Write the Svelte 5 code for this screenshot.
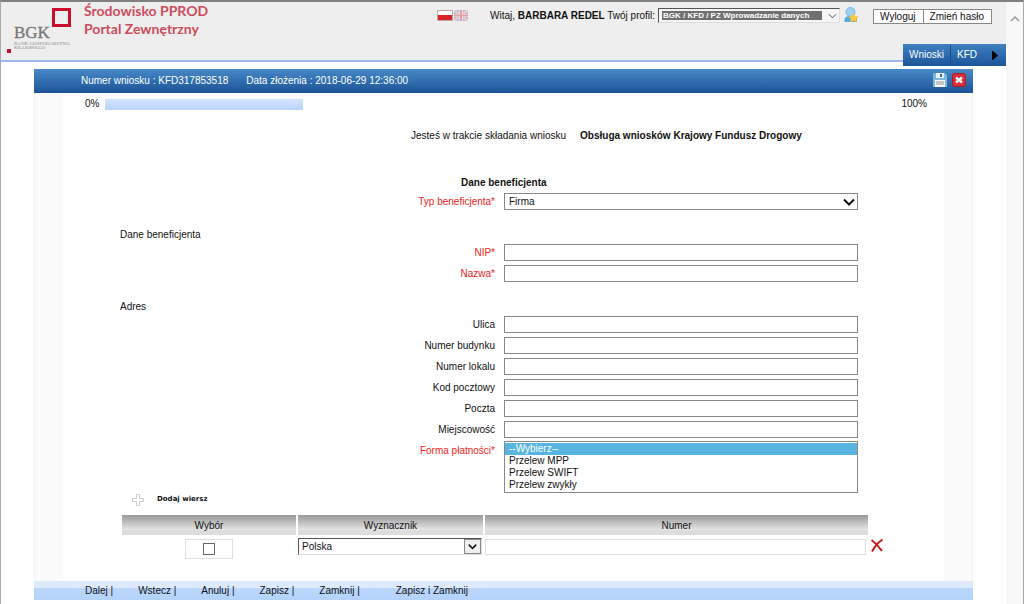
<script>
	let userName = 'BARBARA REDEL';
	let progress = $state(25);
	let beneficiaryType = $state('Firma');
	let payment = $state('');

	const company = [
		{ id: 'nip', label: 'NIP', required: true },
		{ id: 'nazwa', label: 'Nazwa', required: true }
	];

	const address = [
		{ id: 'ulica', label: 'Ulica' },
		{ id: 'budynek', label: 'Numer budynku' },
		{ id: 'lokal', label: 'Numer lokalu' },
		{ id: 'kod', label: 'Kod pocztowy' },
		{ id: 'poczta', label: 'Poczta' },
		{ id: 'miejscowosc', label: 'Miejscowość' }
	];

	const actions = ['Dalej |', 'Wstecz |', 'Anuluj |', 'Zapisz |', 'Zamknij |'];
</script>

{#snippet field(f)}
	<div class="row">
		<label for={f.id} class:required={f.required}>{f.label}{f.required ? '*' : ''}</label>
		<input id={f.id} type="text" />
	</div>
{/snippet}

{#snippet chevron()}
	<svg viewBox="0 0 12 8" width="12" height="8" aria-hidden="true">
		<path d="M1 1.5 6 6.5 11 1.5" fill="none" stroke="currentColor" stroke-width="2" />
	</svg>
{/snippet}

<div class="window">
	<div class="page">
		<header>
			<svg class="logo" viewBox="0 0 68 50" width="68" height="50" role="img" aria-label="BGK">
				<rect x="47.500" y="6.500" width="16" height="16" fill="none" stroke="#c8102e" stroke-width="3" />
				<text x="8" y="35" font-family="Liberation Serif" font-size="17" fill="#777" stroke="#777" stroke-width=".3">BGK</text>
				<text x="8" y="42" font-family="Liberation Serif" font-size="5" fill="#888">BANK GOSPODARSTWA</text>
				<text x="8" y="46" font-family="Liberation Serif" font-size="5" fill="#888">KRAJOWEGO</text>
				<rect x="1" y="46" width="4" height="4" fill="#c8102e" />
			</svg>
			<h1>Środowisko PPROD<br />Portal Zewnętrzny</h1>

			<div class="tools">
				<div class="flags">
					<button aria-label="Polski">
						<svg viewBox="0 0 16 11" width="16" height="11">
							<rect width="16" height="11" rx="1" fill="#b9a5a5" />
							<rect x="1" y="1" width="14" height="5" fill="#fafafa" />
							<rect x="1" y="5" width="14" height="5" fill="#d9232a" />
						</svg>
					</button>
					<button aria-label="English">
						<svg viewBox="0 0 16 11" width="16" height="11" opacity="0.5">
							<rect x="1" width="14" height="11" rx="1" fill="#7880bc" />
							<path d="M1 0 15 11M15 0 1 11" stroke="#fff" stroke-width="2" />
							<path d="M1 0 15 11M15 0 1 11" stroke="#d66" stroke-width="1" />
							<path d="M8 0V11M1 5.500H15" stroke="#fff" stroke-width="3" />
							<path d="M8 0V11M1 5.500H15" stroke="#d9535a" stroke-width="2" />
						</svg>
					</button>
				</div>
				<span class="hello">Witaj, <b>{userName}</b> <label for="profil">Twój profil:</label></span>
				<div class="select profile">
					<select id="profil">
						<option>BGK / KFD / PZ Wprowadzanie danych</option>
					</select>
					<svg viewBox="0 0 10 6" width="9" height="6" aria-hidden="true">
						<path d="M1 1 5 5 9 1" fill="none" stroke="#444" stroke-width="1" />
					</svg>
				</div>
				<svg class="user" viewBox="0 0 15 16" width="15" height="16" aria-hidden="true">
					<circle cx="6.500" cy="5" r="4.500" fill="#9fd2f2" stroke="#7ab6dd" />
					<path d="M.5 15V12Q1 9 6.500 9T13 12V15Z" fill="#5da9dd" />
					<path d="m9.500 6 1.700 3 3.500.5-2.600 2.500.8 3.500-3.400-1.700-3.300 1.700.7-3.500L4.400 9.500 7.900 9Z" fill="#f8c73c" />
				</svg>
				<div class="session">
					<button>Wyloguj</button>
					<button>Zmień hasło</button>
				</div>
			</div>

			<nav>
				<a href="#wnioski">Wnioski</a>
				<a href="#kfd">KFD</a>
				<button aria-label="Dalej">
					<svg viewBox="0 0 6 9" width="6" height="9"><path d="M0 0H1L6 4.500 1 9H0Z" /></svg>
				</button>
			</nav>
		</header>

		<main>
			<div class="title">
				<span>Numer wniosku : KFD317853518</span>
				<span>Data złożenia : 2018-06-29 12:36:00</span>
				<div class="title-buttons">
					<button aria-label="Zapisz">
						<svg viewBox="0 0 14 14" width="14" height="14">
							<path d="M1 0H12L14 2V14H0V1Z" fill="#7db9dc" />
							<rect x="3" width="8" height="5" fill="#eef5fa" />
							<rect x="7" y="1" width="2" height="3" fill="#2e6ea6" />
							<rect x="2" y="7" width="10" height="7" fill="#f5f5f5" />
							<path d="M3 9H11M3 11H11" stroke="#8f989e" />
						</svg>
					</button>
					<button aria-label="Zamknij">
						<svg viewBox="0 0 14 14" width="14" height="14">
							<rect x=".5" y=".5" width="13" height="13" rx="2" fill="#d52f3a" stroke="#a81c2c" />
							<path d="M4 4.500 10 9.500M10 4.500 4 9.500" stroke="#fff" stroke-width="2.400" />
						</svg>
					</button>
				</div>
			</div>

			<div class="body">
				<div class="progress">
					<span>0%</span>
					<div class="track"><div class="bar" style="width: {progress}%"></div></div>
					<span>100%</span>
				</div>

				<p class="intro">
					<span>Jesteś w trakcie składania wniosku</span>
					<b>Obsługa wniosków Krajowy Fundusz Drogowy</b>
				</p>

				<form>
					<h2>Dane beneficjenta</h2>
					<div class="row">
						<label for="typ" class="required">Typ beneficjenta*</label>
						<div class="select">
							<select id="typ" bind:value={beneficiaryType}>
								<option>Firma</option>
							</select>
							{@render chevron()}
						</div>
					</div>

					<h3>Dane beneficjenta</h3>
					{#each company as f}
						{@render field(f)}
					{/each}

					<h3>Adres</h3>
					{#each address as f}
						{@render field(f)}
					{/each}

					<div class="row list-row">
						<label for="platnosc" class="required">Forma płatności*</label>
						<select id="platnosc" size="4" bind:value={payment}>
							<option value="">--Wybierz--</option>
							<option>Przelew MPP</option>
							<option>Przelew SWIFT</option>
							<option>Przelew zwykły</option>
						</select>
					</div>
				</form>

				<button class="add">
					<svg viewBox="0 0 12 12" width="12" height="12" aria-hidden="true">
						<path d="M4.500.5h3v4h4v3h-4v4h-3v-4h-4v-3h4Z" fill="#fff" stroke="#ccc" />
					</svg>
					Dodaj wiersz
				</button>

				<table>
					<thead>
						<tr>
							<th class="pick">Wybór</th>
							<th class="country">Wyznacznik</th>
							<th>Numer</th>
							<td class="remove"></td>
						</tr>
					</thead>
					<tbody>
						<tr>
							<td><div class="check"><input type="checkbox" aria-label="Wybór" /></div></td>
							<td>
								<div class="select boxed">
									<select aria-label="Wyznacznik">
										<option>Polska</option>
									</select>
									{@render chevron()}
								</div>
							</td>
							<td><input class="number" type="text" aria-label="Numer" /></td>
							<td>
								<button aria-label="Usuń">
									<svg viewBox="0 0 12 13" width="12" height="13">
										<path d="M.5 1Q6 5 11 12M11.500.5Q5 5 1 12.500" fill="none" stroke="#c61a1a" stroke-width="2" />
									</svg>
								</button>
							</td>
						</tr>
					</tbody>
				</table>
			</div>

			<footer>
				<div class="actions">
					{#each actions as action}
						<button>{action}</button>
					{/each}
				</div>
				<button>Zapisz i Zamknij</button>
			</footer>
		</main>
	</div>

	<div class="scroll">
		<svg viewBox="0 0 10 6" width="10" height="6" aria-hidden="true">
			<path d="M1 5 5 1 9 5" fill="none" stroke="#999" stroke-width="1.500" />
		</svg>
	</div>
</div>

<style>
	:global(body) {
		background: #fff;
		color: #111;
		font-family: "Liberation Sans", Arial, sans-serif;
		font-size: 10px;
		line-height: 13px;
	}

	* {
		box-sizing: border-box;
	}

	button,
	input,
	select {
		margin: 0;
		font: inherit;
		color: inherit;
	}

	button {
		padding: 0;
		border: 0;
		background: none;
		cursor: pointer;
	}

	svg {
		display: block;
	}

	h1, h2, h3, p {
		margin: 0;
	}

	.window {
		display: flex;
		min-height: 100vh;
		border: 1px solid #aaa;
		border-top: 2px solid #808080;
		border-bottom: 0;
	}

	.page {
		flex: 1;
		min-width: 0;
	}

	.scroll {
		width: 17px;
		padding: 14px 4px;
		background: #f8f8f8;
	}

	header {
		position: relative;
		display: flex;
		align-items: flex-start;
		height: 60px;
		padding: 0 14px 0 5px;
		background: #eee;
		border-bottom: 2px solid #9db9ea;
	}

	.logo {
		margin-top: 1px;
	}

	h1 {
		margin-left: 10px;
		color: #cb4c5c;
		font-family: Lato, "Open Sans", sans-serif;
		font-size: 14px;
		line-height: 18px;
	}

	.tools {
		display: flex;
		align-items: center;
		height: 26px;
		margin-left: auto;
	}

	.flags {
		display: flex;
	}

	.hello {
		margin: 0 3px 0 21px;
		white-space: nowrap;
	}

	.select {
		position: relative;
		color: #111;
	}

	.select select {
		display: block;
		width: 100%;
		height: 17px;
		padding: 0 20px 0 4px;
		appearance: none;
		background: #fff;
		border: 1px solid #888;
		border-radius: 0;
	}

	.select svg {
		position: absolute;
		top: 5px;
		right: 3px;
		pointer-events: none;
	}

	.profile {
		width: 182px;
	}

	.profile select {
		height: 15px;
		padding-right: 18px;
		color: #fff;
		background: linear-gradient(#707070, #707070) no-repeat 3px 2px / calc(100% - 20px) 9px #f5f5f5;
		border-color: #555 #ddd #ddd #555;
		font-size: 8px;
		font-weight: bold;
		line-height: 9px;
	}

	.user {
		margin: 0 14px 0 4px;
	}

	.session {
		display: flex;
		padding-top: 2px;
	}

	.session button {
		height: 15px;
		padding: 0 7px 0 6px;
		background: #fff;
		border: 1px solid #888;
	}

	.session button + button {
		margin-left: -1px;
	}

	nav {
		position: absolute;
		right: 0;
		bottom: -6px;
		display: flex;
		align-items: center;
		height: 22px;
		background: linear-gradient(#3f80c0, #1c559a);
	}

	nav a {
		padding: 0 6px;
		color: #fff;
		line-height: 20px;
		text-decoration: none;
	}

	nav a + a {
		border-left: 1px solid #1b4c8c;
	}

	nav button {
		padding: 0 8px 0 9px;
	}

	main {
		margin: 7px 33px 0;
	}

	.title {
		display: flex;
		align-items: center;
		gap: 18px;
		height: 24px;
		padding: 0 7px 2px 47px;
		color: #fff;
		background: linear-gradient(#4889c8, #1b5396);
	}

	.title-buttons {
		display: flex;
		gap: 5px;
		margin-left: auto;
	}

	.body {
		padding: 4px 45px 20px 50px;
		border: solid #f2f2f2;
		border-width: 0 1px;
		background:
			linear-gradient(#fbfbfb, #fbfbfb) no-repeat left / 28px 100%,
			linear-gradient(#fbfbfb, #fbfbfb) no-repeat right / 28px 100%;
	}

	.progress {
		display: flex;
		align-items: center;
		gap: 6px;
		line-height: 14px;
	}

	.track {
		flex: 1;
	}

	.bar {
		height: 11px;
		background: linear-gradient(#d3e3fd, #b9d4fb);
	}

	.intro {
		display: flex;
		gap: 14px;
		margin: 18px 0 33px;
		padding-left: 326px;
		white-space: nowrap;
	}

	form {
		margin: 0 -45px 0 -50px;
	}

	h2,
	h3 {
		font-size: 10px;
		line-height: 15px;
	}

	h2 {
		padding: 0 0 1px 426px;
	}

	h3 {
		padding: 15px 0 0 85px;
		font-weight: normal;
	}

	.row {
		display: grid;
		grid-template-columns: 470fr 355fr 114fr;
		align-items: center;
		height: 21px;
		line-height: 13px;
	}

	.row label {
		padding-right: 9px;
		text-align: right;
	}

	.required {
		color: #f01c1c;
	}

	.row input {
		width: 100%;
		height: 17px;
		padding: 0 4px;
		border: 1px solid #888;
	}

	.list-row {
		align-items: start;
		height: auto;
		padding-top: 1px;
	}

	.list-row label {
		padding-top: 3px;
	}

	.list-row select {
		width: 100%;
		height: 52px;
		padding: 1px 0;
		background: #fff;
		border: 1px solid #888;
		border-radius: 0;
		outline: 0;
		overflow: hidden;
	}

	.list-row option {
		min-height: 12px;
		height: 12px;
		padding: 0 4px;
		line-height: 12px;
	}

	.list-row option:checked {
		background: linear-gradient(#58b5e1, #58b5e1);
		-webkit-text-fill-color: #fff;
	}

	.add {
		display: flex;
		align-items: center;
		gap: 13px;
		margin-left: 47px;
		font-family: "DejaVu Sans", Verdana, sans-serif;
		font-size: 7px;
		font-weight: bold;
	}

	table {
		width: calc(100% - 75px);
		margin: 7px 0 0 35px;
		border-spacing: 2px;
		table-layout: fixed;
	}

	th {
		height: 20px;
		padding: 0;
		font-weight: normal;
		background: linear-gradient(#999, #e6e6e6 75%, #ddd 76%);
	}

	td {
		padding: 0;
		vertical-align: top;
	}

	.pick {
		width: 174px;
	}

	.country {
		width: 185px;
	}

	.remove {
		width: 15px;
	}

	.check {
		display: flex;
		width: 48px;
		height: 20px;
		margin: 2px auto 0;
		border: 1px solid #e0e0e0;
	}

	.check input {
		width: 12px;
		height: 12px;
		margin: auto;
		appearance: none;
		background: #fff;
		border: 1px solid #666;
	}

	.check input:checked {
		background: #666;
	}

	.boxed {
		margin: 1px 1px 0 0;
	}

	.boxed select {
		border-color: #555 #ddd #ddd #555;
		padding-left: 3px;
	}

	.boxed svg {
		top: 1px;
		right: 1px;
		width: 17px;
		height: 15px;
		padding: 3px;
		background: #eee;
		border: 1px solid #888;
	}

	.number {
		display: block;
		width: calc(100% - 2px);
		height: 16px;
		margin-top: 2px;
		border: 1px solid #e0e0e0;
	}

	td button {
		padding: 2px 1px;
	}

	footer {
		display: flex;
		gap: 36px;
		height: 19px;
		padding-left: 51px;
		background: linear-gradient(#deeafc 35%, #bcd7fc 36%, #b4d2fb);
	}

	.actions {
		display: flex;
		gap: 25px;
	}
</style>
